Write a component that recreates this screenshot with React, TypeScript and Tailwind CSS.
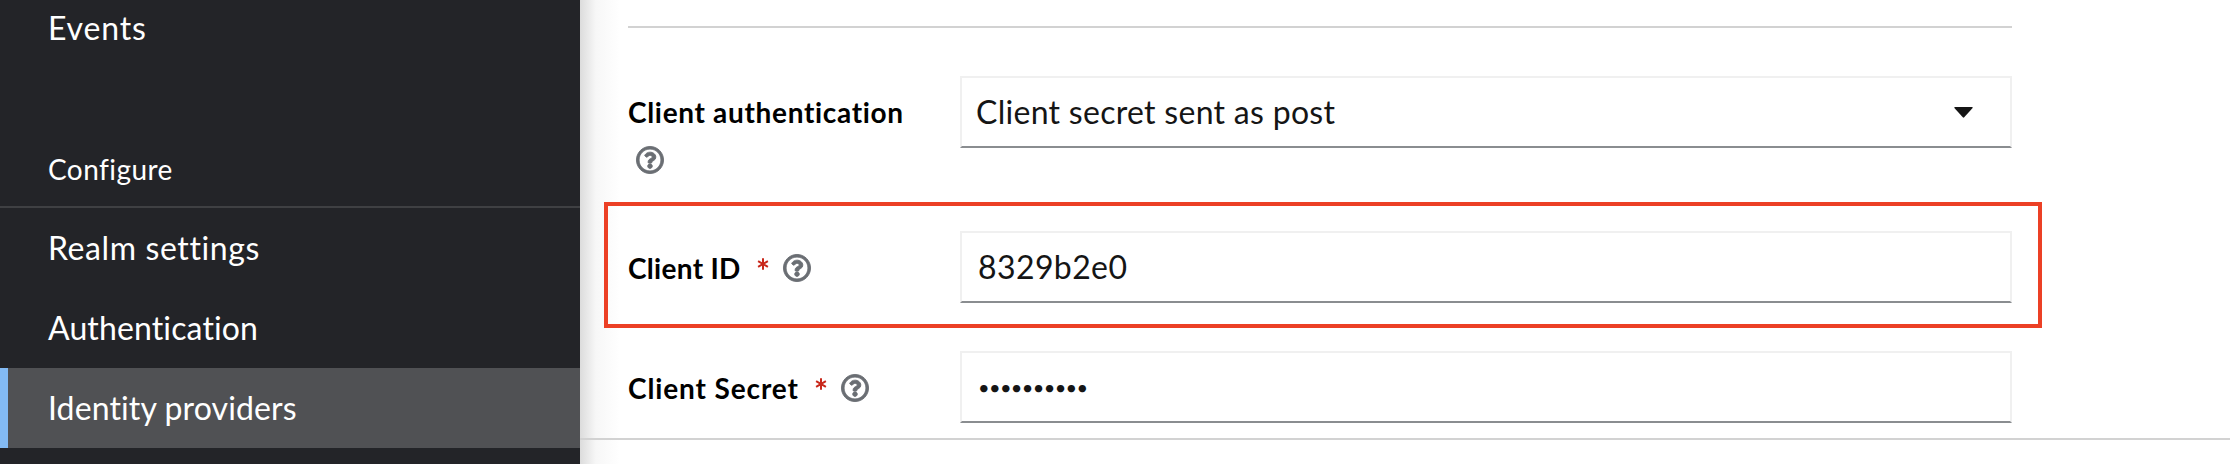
import type { ReactNode } from "react";
import { FaRegQuestionCircle } from "react-icons/fa";

function NavItem({ label, tracking, active = false }: { label: string; tracking: string; active?: boolean }) {
  return (
    <a
      className={`flex h-20 shrink-0 items-center border-l-8 pb-px pl-10 text-[32px] text-white ${tracking} ${
        active ? "border-[#83baf3] bg-[#505154]" : "border-transparent"
      }`}
    >
      {label}
    </a>
  );
}

function HelpIcon() {
  return <FaRegQuestionCircle className="size-[28px] shrink-0 overflow-visible stroke-[#6a6e73] stroke-[16px] text-[#6a6e73]" />;
}

function Required() {
  return (
    <svg viewBox="0 0 12 12" className="mb-[7px] size-3 shrink-0" stroke="#c9281b" strokeWidth="2" aria-label="required">
      <path d="M6 0.3V11.7M1.1 3.1L10.9 8.9M10.9 3.1L1.1 8.9" />
    </svg>
  );
}

function Field({ children, className = "" }: { children?: ReactNode; className?: string }) {
  return (
    <div
      className={`flex h-[72px] w-[1052px] items-center border-2 border-[#f0f0f0] border-b-[#8a8d90] bg-white text-[32px] text-[#151515] ${className}`}
    >
      {children}
    </div>
  );
}

export default function App() {
  return (
    <div className="flex h-[464px] w-[2230px] overflow-hidden bg-white font-[Lato,sans-serif] leading-none">
      <nav className="flex w-[580px] shrink-0 flex-col overflow-hidden bg-[#232428]">
        <div className="-mt-3">
          <NavItem label="Events" tracking="tracking-[0.85px]" />
        </div>
        <div className="mt-[60px] flex h-20 shrink-0 items-center border-b-2 border-[#3f4043] pt-[3px] pl-12 text-[28px] tracking-[0.45px] text-white">
          Configure
        </div>
        <NavItem label="Realm settings" tracking="tracking-[0.6px]" />
        <NavItem label="Authentication" tracking="tracking-[0.13px]" />
        <NavItem label="Identity providers" tracking="tracking-[0.12px]" active />
      </nav>

      <main className="relative flex grow flex-col">
        <div className="flex h-[440px] flex-col border-b-2 border-[#d2d2d2] bg-linear-to-r from-[#dcdcdc] via-[#f7f7f7] via-[16px] to-white to-[40px] pl-12">
          <div className="mt-[26px] h-[2px] w-[1384px] shrink-0 bg-[#d2d2d2]" />

          <div className="mt-12 flex h-[155px] shrink-0">
            <div className="w-[332px] text-[28px] font-bold tracking-[0.68px] text-black">
              <div className="flex h-[70px] items-center pt-[2px] whitespace-nowrap">Client authentication</div>
              <div className="pl-2">
                <HelpIcon />
              </div>
            </div>
            <Field className="justify-between pb-px pl-[14px] tracking-[0.29px]">
              Client secret sent as post
              <svg viewBox="0 0 19 11" className="mt-[2px] mr-[37px] h-[11px] w-[19px]" fill="#151515">
                <path d="M1 0H18Q19.200 .4 18.400 1.300L10.200 10.300Q9.500 11 8.800 10.300L.6 1.300Q-.2 .4 1 0Z" />
              </svg>
            </Field>
          </div>

          <div className="flex h-[72px] shrink-0 items-center">
            <div className="flex w-[332px] items-center pt-px text-[28px] font-bold tracking-[0.3px] text-black">
              Client ID
              <span className="ml-4 mr-[14px] flex">
                <Required />
              </span>
              <HelpIcon />
            </div>
            <Field className="pl-4 tracking-[0.4px]">8329b2e0</Field>
          </div>

          <div className="mt-12 flex h-[72px] shrink-0 items-center">
            <div className="flex w-[332px] items-center pt-px text-[28px] font-bold tracking-[0.88px] text-black">
              Client Secret
              <span className="ml-4 mr-[14px] flex">
                <Required />
              </span>
              <HelpIcon />
            </div>
            <Field className="pl-4">
              <span className="text-[20px] tracking-[-0.65px]">••••••••••</span>
            </Field>
          </div>
        </div>
        <div className="grow bg-linear-to-r from-[#dcdcdc] via-[#f7f7f7] via-[16px] to-white to-[40px]" />
        <div className="absolute left-6 top-[202px] h-[126px] w-[1438px] border-4 border-[#ec4025]" />
      </main>
    </div>
  );
}
